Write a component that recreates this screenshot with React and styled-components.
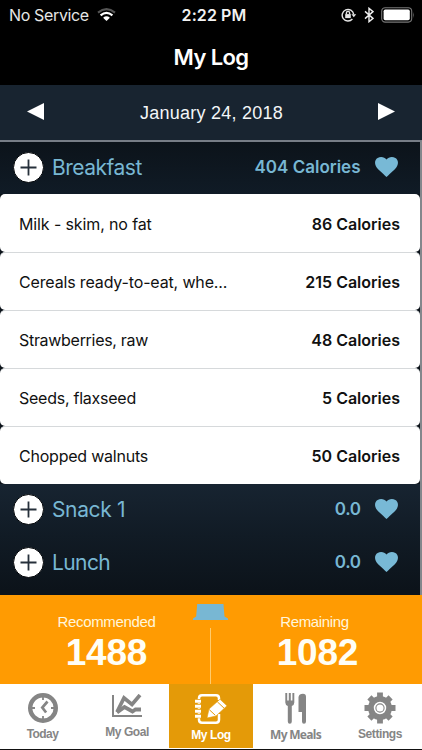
import React from "react";
import styled, { createGlobalStyle } from "styled-components";

const Global = createGlobalStyle`
  * { box-sizing: border-box; }
  body { margin: 0; background: #000; font-family: Inter, "Liberation Sans", sans-serif; }
`;
const Screen = styled.main`
  width: 422px; height: 750px; display: flex; flex-direction: column; overflow: hidden;
  background: #000; color: #fff; white-space: nowrap;
`;
const StatusBar = styled.header`
  height: 30px; flex: none; display: grid; grid-template-columns: 1fr auto 1fr; align-items: center;
  padding: 0 7px 0 9px; font-size: 16px; line-height: 30px;
`;
const Carrier = styled.div`
  display: flex; align-items: center; gap: 8px; color: #e6e6e6; letter-spacing: -0.35px;
`;
const Clock = styled.div`font-weight: 600; color: #f2f2f2; letter-spacing: 0.1px; padding-left: 4px;`;
const Indicators = styled.div`display: flex; align-items: center; justify-content: flex-end; gap: 7px;`;
const Title = styled.h1`
  margin: 0; height: 55px; flex: none; text-align: center; font-size: 22px; line-height: 54px; font-weight: 600;
  letter-spacing: -0.6px;
`;
const DateBar = styled.nav`
  height: 55px; flex: none; display: flex; align-items: center; justify-content: space-between;
  padding: 0 27px; background: #182430;
`;
const ArrowButton = styled.button`
  border: 0; padding: 0 0 3px; background: none; display: flex;
`;
const DateLabel = styled.span`
  font: 18px/55px "Liberation Sans", Arial, sans-serif; letter-spacing: 0.25px; color: #f3f6f8;
  padding: 2px 0 0 1px;
`;
const Log = styled.section`
  height: 455px; flex: none; border-top: 2px solid #777d86; border-right: 2px solid #83878c;
  background: #0c131a;
`;
const MealHeader = styled.div`
  height: ${p => p.$height}px; display: flex; align-items: center; padding: 0 22.5px 2px 13px;
  color: #78b7d3; background: ${p => p.$bg};
`;
const AddButton = styled.button`
  width: 31px; height: 31px; padding: 0; border: 1px solid #05080b; border-radius: 50%; background: #fff;
  display: grid; place-items: center; flex: none;
`;
const MealName = styled.span`
  flex: 1; margin-left: 8px; font-size: 21px; letter-spacing: ${p => p.$spacing}px;
`;
const MealTotal = styled.span`
  font-size: 17px; font-weight: 600; letter-spacing: ${p => p.$spacing}px; margin-right: 14px;
`;
const FoodList = styled.ul`margin: 0; padding: 0; list-style: none; background: #0c131a;`;
const FoodRow = styled.li`
  height: 58px; display: flex; justify-content: space-between; align-items: center; padding: 1px 20px 0 19px;
  background: #fff; border-radius: 5px; color: #111; font-size: 16px;
  & + & { border-top: 1px solid #d6d9db; }
`;
const FoodName = styled.span`letter-spacing: ${p => p.$spacing}px;`;
const FoodEnergy = styled.span`font-weight: 600;`;
const Summary = styled.section`
  position: relative; height: 89px; flex: none; display: flex; background: #ff9b02;
  font-family: "Liberation Sans", Arial, sans-serif;
`;
const Figure = styled.div`
  flex: 1 1 0; display: flex; flex-direction: column; align-items: center; padding-top: 17px; padding-left: 2px;
`;
const FigureLabel = styled.span`
  font-size: 15px; line-height: 20px; letter-spacing: -0.35px; color: #fff6db; margin-left: ${p => p.$shift}px;
`;
const FigureValue = styled.strong`font-size: 37px; line-height: 41px; letter-spacing: -0.2px; color: #fffef5;`;
const Divider = styled.span`
  position: absolute; left: 210px; top: 33px; bottom: 0; width: 1px; background: #ffcc6d;
`;
const Handle = styled.span`
  position: absolute; left: 193px; top: 9px; width: 35px; height: 16px; background: #78b7d3;
  clip-path: polygon(12% 0, 87% 0, 90% 78%, 100% 90%, 100% 100%, 0 100%, 0 90%, 9% 78%);
`;
const TabBar = styled.nav`
  height: 65px; flex: none; display: grid; grid-template-columns: 85px 84px 84px 85px 84px;
  background: #fff; border-bottom: 1px solid #fff;
`;
const Tab = styled.button`
  border: 0; padding: ${p => p.$top}px 0 0; display: flex; flex-direction: column; align-items: center;
  background: ${p => (p.$active ? "#e49a08" : "#fff")}; color: ${p => (p.$active ? "#fff" : "#858585")};
`;
const TabLabel = styled.span`
  font: bold 12px/14px ${p => (p.$humanist ? '"Noto Sans"' : '"Liberation Sans"')}, Arial, sans-serif;
  letter-spacing: ${p => p.$spacing}px; margin-top: ${p => p.$gap}px;
`;
const HomeEdge = styled.div`height: 1px; background: #111; flex: none;`;

const Wifi = () => (
  <svg width="19" height="14" viewBox="0 0 19 14" fill="none">
    <path d="M1 4.6Q9.5-2.2 18 4.6" stroke="#555" strokeWidth="2.1" />
    <path d="M3.6 7.3Q9.5 2.3 15.4 7.3" stroke="#fff" strokeWidth="2.2" />
    <path d="M6.1 9.7Q9.5 6.8 12.9 9.7L9.5 13.1Z" fill="#fff" />
  </svg>
);
const RotationLock = () => (
  <svg width="16" height="14" viewBox="0 0 16 14" fill="none" stroke="#e5e5e5" strokeWidth="1.4">
    <path d="M11.4 11A5.8 5.8 0 1 1 12.7 6.4" /><path d="M10.4 6.2h4.8l-2.4 3z" fill="#e5e5e5" stroke="none" />
    <rect x="4.2" y="6.1" width="5.6" height="4" fill="#e5e5e5" stroke="none" /><path d="M5.4 6.2V5a1.6 1.6 0 0 1 3.2 0v1.2" />
  </svg>
);
const Bluetooth = () => (
  <svg width="10" height="16" viewBox="0 0 10 16" fill="none" stroke="#eee" strokeWidth="1.4">
    <path d="M1 4.4l8 7-4 3.3V1.3l4 3.3-8 7" />
  </svg>
);
const Battery = () => (
  <svg width="34" height="16" viewBox="0 0 34 16">
    <rect x="0.7" y="0.7" width="30" height="14.4" rx="3.5" fill="none" stroke="#777" strokeWidth="1.1" />
    <rect x="2.6" y="2.6" width="26.2" height="10.6" rx="1.7" fill="#fff" /><path d="M32 5q1.4 3 0 6z" fill="#777" />
  </svg>
);
const Arrow = ({ next }) => (
  <svg width="17" height="17" viewBox="0 0 17 17"><path d={next ? "M0 0L17 8.5 0 17z" : "M17 0L0 8.5 17 17z"} fill="#fff" /></svg>
);
const Plus = () => (
  <svg width="17" height="17" viewBox="0 0 17 17"><path d="M8.5 .5v16M.5 8.5h16" stroke="#26303b" strokeWidth="1.8" /></svg>
);
const Heart = () => (
  <svg width="23" height="20" viewBox="0 0 23 20">
    <path d="M11.5 20Q9 17.4 3.4 12.4C-1.2 8.2-.7 3.1 2.6 1.1 5.8-.8 9.6.2 11.5 2.6 13.4.2 17.2-.8 20.4 1.1c3.3 2 3.8 7.1-.8 11.3Q14 17.4 11.5 20z" fill="#78b9d6" />
  </svg>
);
const TodayIcon = () => (
  <svg width="32" height="32" viewBox="0 0 32 32" fill="none" stroke="currentColor">
    <circle cx="16" cy="16" r="12.8" strokeWidth="4.4" />
    <path d="M16 4v4M16 24v4M4 16h4M24 16h4" strokeWidth="1.8" />
    <path d="M20.5 9.5l-5.2 6 3.8 5" strokeWidth="2.7" />
  </svg>
);
const GoalIcon = () => (
  <svg width="30" height="24" viewBox="0 0 30 24" fill="none" stroke="currentColor">
    <path d="M1 1v21H30" strokeWidth="2" />
    <path d="M5 18L12 4l8 6.5L28 1" strokeWidth="3.7" />
    <path d="M5 18.5l7.5-5.5 8 4.5 3-2H29" strokeWidth="3.8" />
  </svg>
);
const LogIcon = () => (
  <svg width="32" height="30" viewBox="0 0 32 30" fill="none" stroke="currentColor">
    <path d="M24 6V4.3q0-3-3-3H7q-3 0-3 3v21.4q0 3 3 3h14q3 0 3-3V20" strokeWidth="2.5" />
    <path d="M0 7.2h6M0 12.2h6M0 17.2h6M0 22.2h6" strokeWidth="4.2" stroke="#e49a08" />
    <path d="M0 7.2h6M0 12.2h6M0 17.2h6M0 22.2h6" strokeWidth="3" />
    <path d="M12 24l2-9L25 5.2l7 6.6L21 22z" fill="currentColor" stroke="#e49a08" strokeWidth=".6" />
    <path d="M14.3 15.7l6 5.6M22.3 7.8l6.8 6.4" stroke="#e49a08" strokeWidth="1" />
  </svg>
);
const MealsIcon = () => (
  <svg width="22" height="31" viewBox="0 0 22 31" fill="currentColor">
    <path d="M.3 0h1.9v7.5h1.6V0h2v7.5h1.6V0h1.9v9.5Q9.3 12 6.8 13v15.5q0 2.2-2 2.2t-2-2.2V13Q.3 12 .3 9.5zM13.5 4Q14.2.8 18 .8q3 0 3 3v24.7q0 2.2-2 2.2t-2-2.2V19h-3.5z" />
  </svg>
);
const SettingsIcon = () => (
  <svg width="32" height="32" viewBox="0 0 32 32" fill="none" stroke="currentColor">
    <circle cx="16" cy="16" r="9.1" strokeWidth="5.8" />
    <path d="M16 .5v6M16 25.5v6M.5 16h6M25.5 16h6M5.4 5.4l4 4M22.6 22.6l4 4M26.6 5.4l-4 4M9.4 22.6l-4 4" strokeWidth="5.8" />
    <circle cx="16" cy="16" r="4.1" strokeWidth="1.1" />
  </svg>
);

const foods = [
  ["Milk - skim, no fat", "86 Calories", -0.12],
  ["Cereals ready-to-eat, whe...", "215 Calories", -0.15],
  ["Strawberries, raw", "48 Calories", -0.3],
  ["Seeds, flaxseed", "5 Calories", -0.25],
  ["Chopped walnuts", "50 Calories", -0.22],
];
const tabs = [
  ["Today", TodayIcon, 8, 3, -0.6],
  ["My Goal", GoalIcon, 10, 7, -0.45],
  ["My Log", LogIcon, 10, 4, -0.4],
  ["My Meals", MealsIcon, 9, 4, -0.7],
  ["Settings", SettingsIcon, 8, 3, -0.4],
];

function Meal({ name, total, height, bg, spacing, totalSpacing = 0 }) {
  return (
    <MealHeader $height={height} $bg={bg}>
      <AddButton aria-label={`Add to ${name}`}><Plus /></AddButton>
      <MealName $spacing={spacing}>{name}</MealName>
      <MealTotal $spacing={totalSpacing}>{total}</MealTotal>
      <Heart />
    </MealHeader>
  );
}

export default function App() {
  return (
    <Screen>
      <Global />
      <StatusBar>
        <Carrier>No Service <Wifi /></Carrier>
        <Clock>2:22 PM</Clock>
        <Indicators><RotationLock /><Bluetooth /><Battery /></Indicators>
      </StatusBar>
      <Title>My Log</Title>
      <DateBar>
        <ArrowButton aria-label="Previous day"><Arrow /></ArrowButton>
        <DateLabel>January 24, 2018</DateLabel>
        <ArrowButton aria-label="Next day"><Arrow next /></ArrowButton>
      </DateBar>
      <Log>
        <Meal name="Breakfast" total="404 Calories" height={52} spacing={-0.5} bg="linear-gradient(#0c131a, #101b26)" />
        <FoodList>
          {foods.map(([name, energy, spacing]) => (
            <FoodRow key={name}><FoodName $spacing={spacing}>{name}</FoodName><FoodEnergy>{energy}</FoodEnergy></FoodRow>
          ))}
        </FoodList>
        <Meal name="Snack 1" total="0.0" height={52} spacing={-0.35} totalSpacing={-0.4} bg="linear-gradient(#172431, #111b25)" />
        <Meal name="Lunch" total="0.0" height={54} spacing={-0.6} totalSpacing={-0.4} bg="linear-gradient(#111b25, #0c131a)" />
      </Log>
      <Summary>
        <Figure><FigureLabel $shift={0}>Recommended</FigureLabel><FigureValue>1488</FigureValue></Figure>
        <Figure><FigureLabel $shift={-6}>Remaining</FigureLabel><FigureValue>1082</FigureValue></Figure>
        <Handle /><Divider />
      </Summary>
      <TabBar>
        {tabs.map(([label, Icon, top, gap, spacing]) => (
          <Tab key={label} $top={top} $active={label === "My Log"}>
            <Icon /><TabLabel $gap={gap} $spacing={spacing} $humanist={label === "My Meals"}>{label}</TabLabel>
          </Tab>
        ))}
      </TabBar>
      <HomeEdge />
    </Screen>
  );
}
